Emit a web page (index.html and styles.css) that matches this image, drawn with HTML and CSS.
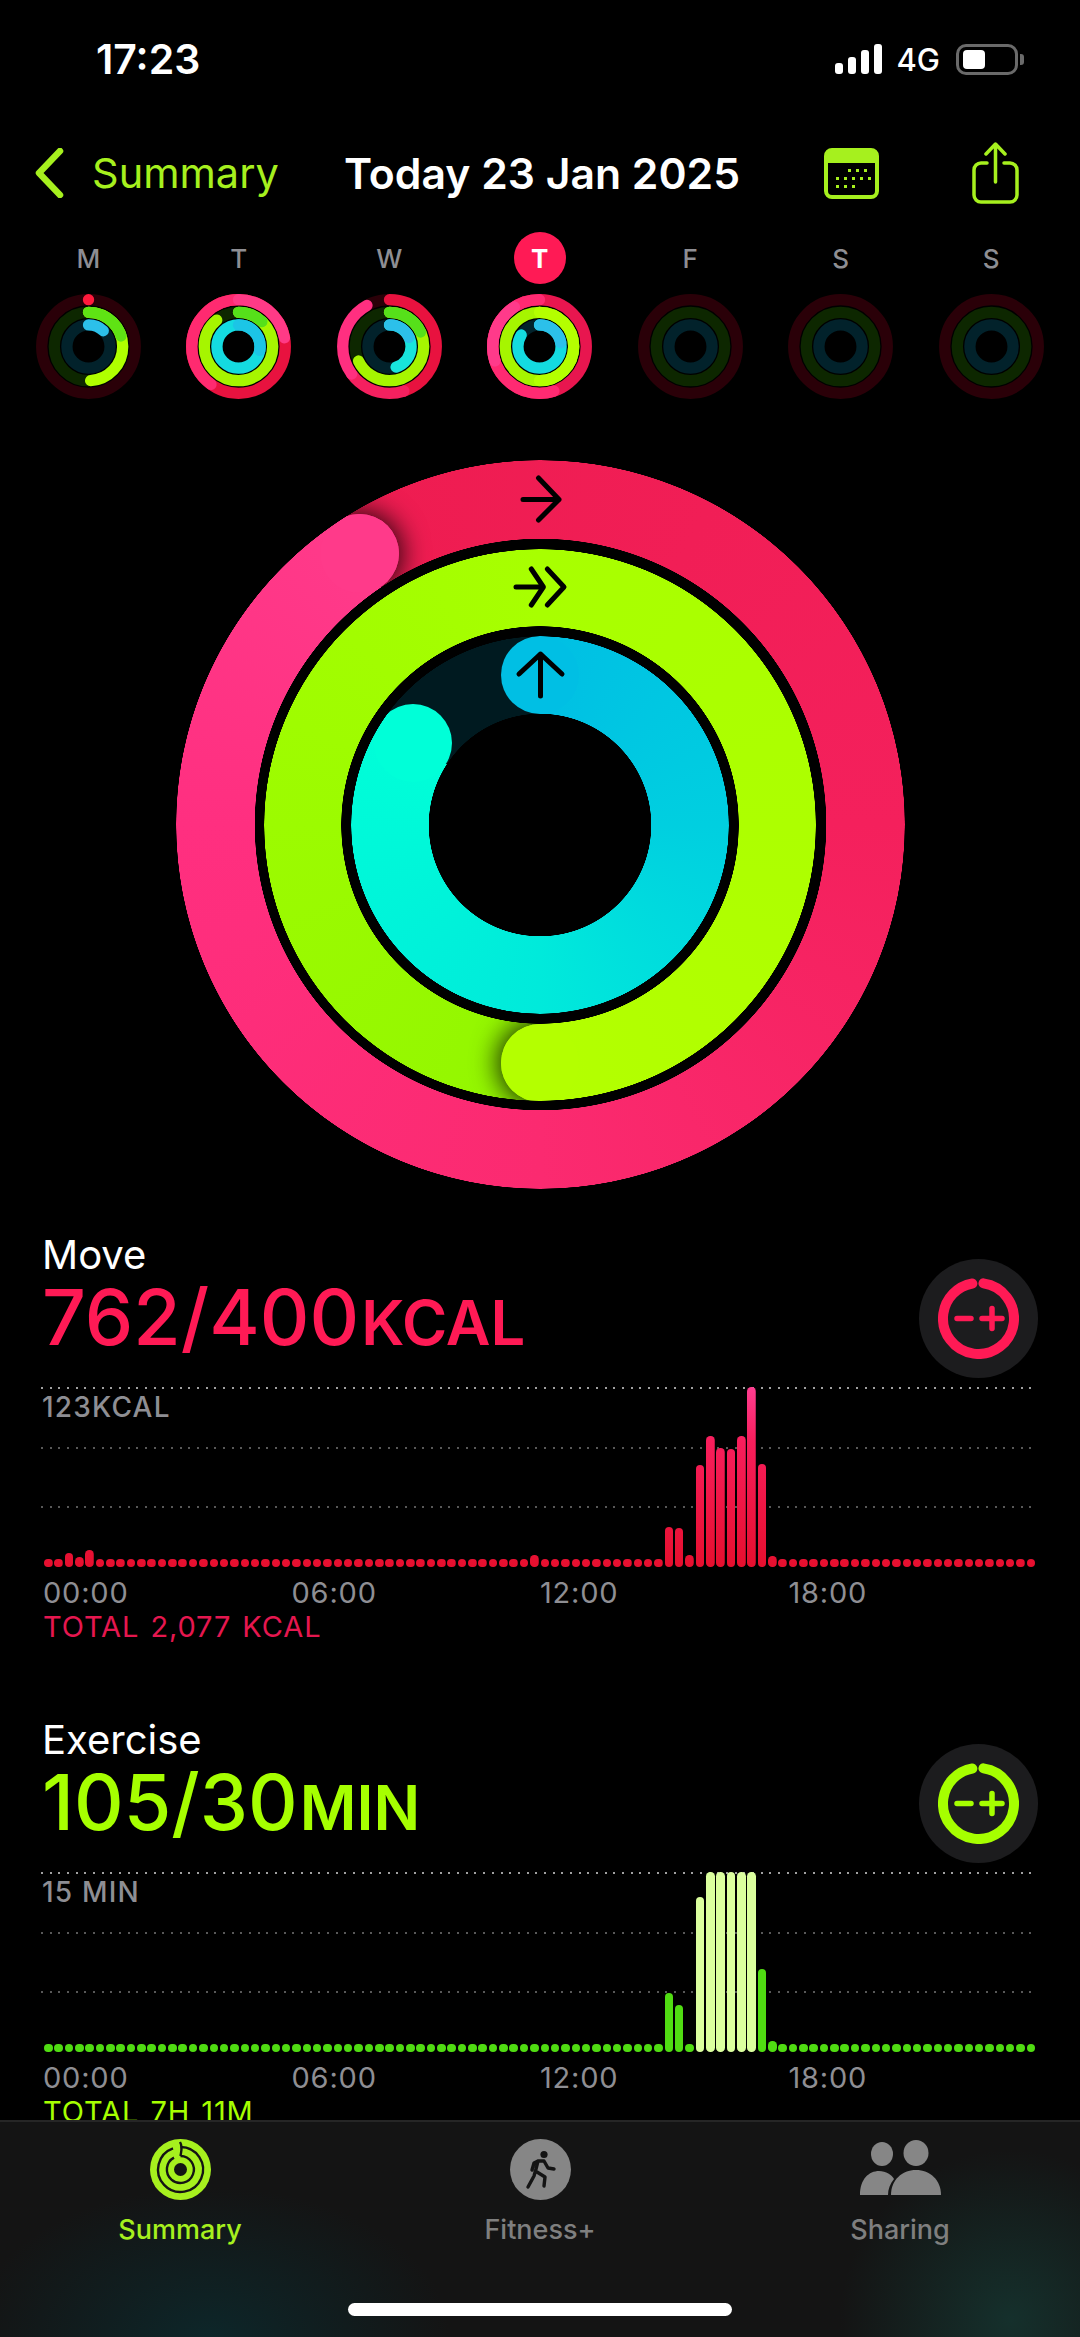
FILE: index.html
```html
<!DOCTYPE html>
<html>
<head>
  <title>Activity</title>
  <meta charset="UTF-8">
  <link rel="stylesheet" href="styles.css">
</head>
<body>
  <div class="screen">
    <div class="statusbar">
      <span class="clock">17:23</span>
      <div class="status-right">
        <div class="signal"><i></i><i></i><i></i><i></i></div>
        <span class="network">4G</span>
        <div class="battery"><div class="battery-fill"></div></div>
        <div class="battery-nub"></div>
      </div>
    </div>

    <div class="nav">
      <svg class="back" width="30" height="50" viewBox="0 0 30 50"><path d="M26 3 L5 25 L26 47"/></svg>
      <span class="nav-back">Summary</span>
      <span class="nav-title">Today 23 Jan 2025</span>
      <svg class="nav-cal" width="55" height="51" viewBox="0 0 55 51">
        <rect x="2" y="2" width="51" height="47" rx="6" class="cal-frame"/>
        <path d="M2 15 V8 a6 6 0 0 1 6 -6 H47 a6 6 0 0 1 6 6 V15 Z" class="cal-top"/>
        <g class="cal-dots">
          <rect x="24" y="21" width="3" height="3"/><rect x="32" y="21" width="3" height="3"/><rect x="40" y="21" width="3" height="3"/>
          <rect x="12" y="29" width="3" height="3"/><rect x="20" y="29" width="3" height="3"/><rect x="28" y="29" width="3" height="3"/><rect x="36" y="29" width="3" height="3"/><rect x="44" y="29" width="3" height="3"/>
          <rect x="12" y="37" width="3" height="3"/><rect x="20" y="37" width="3" height="3"/><rect x="28" y="37" width="3" height="3"/>
        </g>
      </svg>
      <svg class="nav-share" width="47" height="62" viewBox="0 0 47 62">
        <path d="M15 21 H9 a7 7 0 0 0 -7 7 V53 a7 7 0 0 0 7 7 H38 a7 7 0 0 0 7 -7 V28 a7 7 0 0 0 -7 -7 H32"/>
        <path d="M23.5 40 V3 M14 12 L23.5 2 L33 12"/>
      </svg>
    </div>

    <div class="week" id="week"></div>

    <div class="rings">
      <div class="ring ring-move">
        <div class="cap cap-move cap-shadow"></div>
        <div class="ring-tail tail-move"></div>
        <div class="cap cap-move"></div>
      </div>
      <div class="ring ring-exercise">
        <div class="cap cap-exercise cap-shadow"></div>
        <div class="ring-tail tail-exercise"></div>
        <div class="cap cap-exercise"></div>
      </div>
      <div class="ring ring-stand">
        <div class="cap cap-stand-start"></div>
        <div class="cap cap-stand-head"></div>
      </div>
      <svg class="ring-arrows" width="729" height="729" viewBox="0 0 729 729">
        <path d="M347 39.5 H383 M362.5 18 L383 39.5 L362.5 60"/>
        <path d="M340 127 H367 M355.3 109 L367.4 127 L355.3 145 M371.3 109 L388 127 L371.3 145"/>
        <path d="M364.5 236 V194 M343 214 L364.5 194 L386 214"/>
      </svg>
    </div>

    <div class="metric metric-move">
      <div class="metric-head">
        <div class="metric-text">
          <div class="metric-name">Move</div>
          <div class="metric-value">762/400<span class="metric-unit">KCAL</span></div>
        </div>
        <div class="adjust">
          <svg width="81" height="81" viewBox="0 0 81 81">
            <circle cx="40.5" cy="40.5" r="35.5" pathLength="100" stroke-dasharray="95 100" transform="rotate(-82 40.5 40.5)" class="adjust-ring"/>
            <path d="M19 40.5 H33 M44 40.5 H64 M54 30.5 V50.5" class="adjust-sign"/>
          </svg>
        </div>
      </div>
      <div class="chart" id="chart-move">
        <div class="grid grid-top"></div>
        <div class="grid grid-mid"></div>
        <div class="grid grid-low"></div>
        <div class="chart-max">123KCAL</div>
        <div class="bars"></div>
      </div>
      <div class="times"><span>00:00</span><span>06:00</span><span>12:00</span><span>18:00</span></div>
      <div class="total">TOTAL 2,077 KCAL</div>
    </div>

    <div class="metric metric-exercise">
      <div class="metric-head">
        <div class="metric-text">
          <div class="metric-name">Exercise</div>
          <div class="metric-value">105/30<span class="metric-unit">MIN</span></div>
        </div>
        <div class="adjust">
          <svg width="81" height="81" viewBox="0 0 81 81">
            <circle cx="40.5" cy="40.5" r="35.5" pathLength="100" stroke-dasharray="95 100" transform="rotate(-82 40.5 40.5)" class="adjust-ring"/>
            <path d="M19 40.5 H33 M44 40.5 H64 M54 30.5 V50.5" class="adjust-sign"/>
          </svg>
        </div>
      </div>
      <div class="chart" id="chart-exercise">
        <div class="grid grid-top"></div>
        <div class="grid grid-mid"></div>
        <div class="grid grid-low"></div>
        <div class="chart-max">15 MIN</div>
        <div class="bars"></div>
      </div>
      <div class="times"><span>00:00</span><span>06:00</span><span>12:00</span><span>18:00</span></div>
      <div class="total">TOTAL 7H 11M</div>
    </div>

    <div class="tabbar">
      <div class="tab tab-active">
        <svg width="61" height="61" viewBox="0 0 61 61">
          <circle cx="30.5" cy="30.5" r="30.5" fill="#a6f01e"/>
          <path d="M30.5 8 A22.5 22.5 0 1 1 23 9.3 M30.5 17 A13.5 13.5 0 1 1 24 18.6" class="tab-rings"/>
          <path d="M30 3 C33 8 31 13 30.5 17" class="tab-rings"/>
          <circle cx="30.5" cy="30.5" r="6.5" fill="#141414"/>
        </svg>
        <span>Summary</span>
      </div>
      <div class="tab">
        <svg width="61" height="61" viewBox="0 0 61 61">
          <circle cx="30.5" cy="30.5" r="30.5" fill="#868686"/>
          <circle cx="34" cy="15.5" r="3.6" fill="#141414"/>
          <path d="M18 48 L24 37 L26 30 L28 22 L34 22 L38 29 L44 30 M28 22 L24 24 L22 31 M27 33 L35 38 L34 47" class="tab-runner"/>
        </svg>
        <span>Fitness+</span>
      </div>
      <div class="tab">
        <svg width="81" height="61" viewBox="0 0 81 61">
          <ellipse cx="22" cy="15" rx="11" ry="12" fill="#868686"/>
          <ellipse cx="56" cy="14" rx="12.5" ry="13" fill="#868686"/>
          <path d="M0 56 C0 40 9 32 19 32 C26 32 32 36 34 40 C30 45 28 50 28 56 Z" fill="#868686"/>
          <path d="M31 56 C31 41 42 31 56 31 C70 31 81 41 81 56 Z" fill="#868686"/>
        </svg>
        <span>Sharing</span>
      </div>
      <div class="home-bar"></div>
    </div>
  </div>

  <script src="app.js"></script>
</body>
</html>
```

FILE: styles.css
```css
* {
  box-sizing: border-box;
}

html, body {
  margin: 0;
  padding: 0;
  background: #000;
}

.screen {
  position: relative;
  width: 1080px;
  height: 2337px;
  overflow: hidden;
  background: #000;
  color: #fff;
  font-family: Inter, "Liberation Sans", sans-serif;
}

/* status bar */
.statusbar {
  display: flex;
  justify-content: space-between;
  align-items: center;
  height: 118px;
  padding-left: 96px;
  padding-right: 56px;
}

.clock {
  font-size: 41px;
  font-weight: 600;
}

.status-right {
  display: flex;
  align-items: center;
}

.signal {
  display: flex;
  align-items: flex-end;
  gap: 5px;
  height: 30px;
  margin-right: 14px;
}

.signal i {
  display: block;
  width: 8px;
  background: #fff;
  border-radius: 3px;
}

.signal i:nth-child(1) { height: 11px; }
.signal i:nth-child(2) { height: 17px; }
.signal i:nth-child(3) { height: 24px; }
.signal i:nth-child(4) { height: 30px; }

.network {
  font-size: 31px;
  font-weight: 500;
  margin-right: 16px;
}

.battery {
  width: 62px;
  height: 31px;
  padding: 3px 4px;
  border: 3px solid #6a6a6a;
  border-radius: 10px;
}

.battery-fill {
  width: 22px;
  height: 100%;
  background: #fff;
  border-radius: 4px;
}

.battery-nub {
  width: 4px;
  height: 11px;
  margin-left: 2px;
  background: #6a6a6a;
  border-radius: 0 3px 3px 0;
}

/* nav */
.nav {
  display: flex;
  align-items: center;
  height: 114px;
  padding-bottom: 4px;
  padding-left: 34px;
}

.back {
  fill: none;
  stroke: #a6f01e;
  stroke-width: 6.5;
  stroke-linecap: round;
  stroke-linejoin: round;
}

.nav-back {
  margin-left: 28px;
  width: 186px;
  font-size: 41.5px;
  color: #a6f01e;
  white-space: nowrap;
}

.nav-title {
  margin-left: 66px;
  width: 393px;
  font-size: 42.7px;
  font-weight: 600;
  white-space: nowrap;
}

.nav-cal {
  margin-left: 87px;
}

.cal-frame {
  fill: none;
  stroke: #a6f01e;
  stroke-width: 4;
}

.cal-top {
  fill: #a6f01e;
}

.cal-dots {
  fill: #a6f01e;
}

.nav-share {
  margin-left: 93px;
  fill: none;
  stroke: #a6f01e;
  stroke-width: 3.5;
  stroke-linecap: round;
  stroke-linejoin: round;
}

/* week strip */
.week {
  display: grid;
  grid-template-columns: repeat(7, 150.5px);
  margin-left: 13px;
}

.day {
  display: flex;
  flex-direction: column;
  align-items: center;
  gap: 10px;
}

.day-label {
  display: flex;
  justify-content: center;
  align-items: center;
  width: 52px;
  height: 52px;
  border-radius: 50%;
  font-size: 26px;
  font-weight: 500;
  color: #8e8e93;
}

.day-today {
  background: #ff1a55;
  color: #fff;
  font-weight: 700;
}

.day svg {
  display: block;
  fill: none;
  stroke-width: 11.3;
  stroke-linecap: round;
}

/* big rings */
.rings {
  position: relative;
  display: grid;
  place-items: center;
  width: 729px;
  height: 729px;
  margin: 61px auto 0;
}

.ring {
  position: relative;
  grid-area: 1 / 1;
  border-radius: 50%;
}

.ring-move {
  width: 729px;
  height: 729px;
  background: conic-gradient(from 326deg, #ee1c50 0deg, #f4205c 124deg, #fb2a70 214deg, #ff2f80 304deg, #ff3a8a 360deg);
  -webkit-mask: radial-gradient(circle closest-side, transparent 285.5px, #000 286px, #000 364px, transparent 364.5px);
  mask: radial-gradient(circle closest-side, transparent 285.5px, #000 286px, #000 364px, transparent 364.5px);
}

.ring-exercise {
  width: 552px;
  height: 552px;
  background: conic-gradient(#a8ff00 0deg, #adff00 90deg, #b4ff00 180deg, #93f600 180deg, #9cfb00 270deg, #a8ff00 360deg);
  -webkit-mask: radial-gradient(circle closest-side, transparent 198.5px, #000 199px, #000 275.5px, transparent 276px);
  mask: radial-gradient(circle closest-side, transparent 198.5px, #000 199px, #000 275.5px, transparent 276px);
}

.ring-stand {
  width: 378px;
  height: 378px;
  background: conic-gradient(#00bfe4 0deg, #00cfe0 90deg, #00eadb 180deg, #00ffd8 303deg, #001a20 303deg, #001a20 360deg);
  -webkit-mask: radial-gradient(circle closest-side, transparent 111px, #000 111.5px, #000 188.5px, transparent 189px);
  mask: radial-gradient(circle closest-side, transparent 111px, #000 111.5px, #000 188.5px, transparent 189px);
}

.ring-tail {
  position: absolute;
  inset: 0;
  border-radius: 50%;
}

.tail-move {
  background: conic-gradient(from 326deg, transparent 0deg 214deg, #fb2a70 214deg, #ff2f80 304deg, #ff3a8a 360deg);
}

.tail-exercise {
  background: conic-gradient(#a8ff00 0deg, #adff00 90deg, #b4ff00 180deg, transparent 180deg);
}

.cap {
  position: absolute;
  border-radius: 50%;
}

.cap-shadow {
  box-shadow: 0 0 26px 4px rgba(0, 0, 0, 0.8);
}

.cap-move {
  left: 144px;
  top: 54px;
  width: 79px;
  height: 79px;
  background: #ff3a8a;
}

.cap-exercise {
  left: 237px;
  top: 475px;
  width: 78px;
  height: 78px;
  background: #b4ff00;
}

.cap-stand-start {
  left: 150px;
  top: 0;
  width: 78px;
  height: 78px;
  background: #00bfe4;
}

.cap-stand-head {
  left: 23px;
  top: 68px;
  width: 78px;
  height: 78px;
  background: #00ffd8;
}

.ring-arrows {
  position: absolute;
  left: 0;
  top: 0;
  fill: none;
  stroke: #000;
  stroke-width: 5;
  stroke-linecap: round;
  stroke-linejoin: round;
}

/* metric sections */
.metric {
  height: 485px;
  padding-left: 44px;
  padding-right: 42px;
}

.metric-move {
  margin-top: 45px;
}

.metric-move { --tint: #ff1a55; }
.metric-exercise { --tint: #a6ff00; }

.metric-head {
  display: flex;
  justify-content: space-between;
  height: 143px;
  margin-bottom: 10px;
}

.metric-text {
  margin-left: -2px;
}

.metric-name {
  font-size: 40px;
  line-height: 42px;
  height: 44px;
}

.metric-value {
  font-size: 77px;
  font-weight: 500;
  line-height: 78px;
  color: var(--tint);
  white-space: nowrap;
}

.metric-unit {
  margin-left: 2px;
  font-size: 61.5px;
  font-weight: 600;
}

.adjust {
  display: flex;
  justify-content: center;
  align-items: center;
  width: 119px;
  height: 119px;
  margin-top: 25px;
  border-radius: 50%;
  background: #1c1c1e;
}

.adjust-ring {
  fill: none;
  stroke: var(--tint);
  stroke-width: 10;
  stroke-linecap: round;
}

.adjust-sign {
  fill: none;
  stroke: var(--tint);
  stroke-width: 5.5;
  stroke-linecap: round;
}

.chart {
  position: relative;
  height: 180px;
  margin-right: 2px;
}

.grid {
  position: absolute;
  left: -3px;
  right: 2px;
  height: 2px;
}

.grid-top {
  top: 0;
  background: repeating-linear-gradient(to right, #a0a0a0 0 2px, transparent 2px 8.67px);
}

.grid-mid {
  top: 60px;
  background: repeating-linear-gradient(to right, #585858 0 2px, transparent 2px 8.67px);
}

.grid-low {
  top: 119px;
  background: repeating-linear-gradient(to right, #585858 0 2px, transparent 2px 8.67px);
}

.chart-max {
  position: absolute;
  left: -2px;
  top: 3px;
  font-size: 28px;
  font-weight: 500;
  letter-spacing: 1.2px;
  line-height: 34px;
  color: #8e8e93;
}

.bars {
  position: absolute;
  inset: 0;
  display: flex;
  justify-content: space-between;
  align-items: flex-end;
}

.bar {
  width: 8.5px;
  border-radius: 4.25px;
}

.metric-move .bar {
  background: linear-gradient(to top, #e60f2e, #f81e5c 70%, #ff3d90) bottom / 100% 180px no-repeat;
}

.metric-exercise .bar {
  background: #50dc12;
}

.metric-exercise .bar-pale {
  background: #dbff9e;
}

.times {
  display: grid;
  grid-template-columns: repeat(4, 248.5px);
  margin-top: 9px;
  margin-left: -1px;
  font-size: 29px;
  letter-spacing: 0.8px;
  line-height: 34px;
  color: #8e8e93;
}

.total {
  margin-left: -1px;
  font-size: 29px;
  letter-spacing: 0.9px;
  word-spacing: 2px;
  line-height: 34px;
  color: var(--tint);
}

.metric-move .total {
  color: #e5174f;
}

/* tab bar, sits over the scrolling content */
.tabbar {
  position: absolute;
  left: 0;
  right: 0;
  bottom: 0;
  display: grid;
  grid-template-columns: repeat(3, 360px);
  height: 217px;
  padding-top: 17px;
  border-top: 2px solid #262626;
  background:
    radial-gradient(ellipse 240px 150px at 210px 100%, #0d2629, transparent),
    radial-gradient(ellipse 170px 170px at 1010px 92%, #15302c, transparent),
    #141414;
}

.tab {
  display: flex;
  flex-direction: column;
  align-items: center;
  font-size: 27px;
  font-weight: 500;
  color: #7f7f7f;
}

.tab svg {
  display: block;
  height: 61px;
}

.tab span {
  margin-top: 14px;
  line-height: 32px;
}

.tab-active {
  color: #a6f01e;
}

.tab-rings {
  fill: none;
  stroke: #141414;
  stroke-width: 2.4;
}

.tab-runner {
  fill: none;
  stroke: #141414;
  stroke-width: 3.4;
  stroke-linecap: round;
  stroke-linejoin: round;
}

.home-bar {
  position: absolute;
  left: 348px;
  bottom: 21px;
  width: 384px;
  height: 13px;
  border-radius: 7px;
  background: #fff;
}
```

FILE: app.js
```js
// week strip: each ring is a list of [colour, start %, end %]
const RADII = [46.8, 34.2, 21.6];
const TRACKS = ['#2a0008', '#0d2700', '#02222b'];

const days = [
  { label: 'M', rings: [
    [['#ff1a3c', 0, 0.01]],
    [['#b0ff00', 0, 49], ['#5fe314', 0, 20]],
    [['#2cc0ea', 0, 12]]
  ] },
  { label: 'T', rings: [
    [['#e8123f', 0, 100], ['#ff2a70', 60, 100], ['#ff3a86', 0, 22]],
    [['#a6f500', 0, 89], ['#56e01a', 0, 12]],
    [['#14dbe0', 0, 100], ['#1cc5e6', 0, 28]]
  ] },
  { label: 'W', rings: [
    [['#e8123f', 0, 45], ['#f4205f', 45, 65], ['#ff2f80', 65, 92]],
    [['#a6f500', 0, 68], ['#56e01a', 0, 18]],
    [['#18e4dc', 0, 45], ['#2cc0ea', 0, 18]]
  ] },
  { label: 'T', today: true, rings: [
    [['#e8164f', 0, 100], ['#ff2a72', 45, 100], ['#ff3a8a', 70, 91]],
    [['#a6f500', 0, 100], ['#b4ff00', 0, 50]],
    [['#14dbe0', 0, 84], ['#2cc0ea', 0, 22]]
  ] },
  { label: 'F', rings: [[], [], []] },
  { label: 'S', rings: [[], [], []] },
  { label: 'S', rings: [[], [], []] }
];

function arc(r, colour, start, end) {
  const len = end - start;
  return `<circle cx="52.5" cy="52.5" r="${r}" pathLength="100" stroke="${colour}" ` +
    `stroke-dasharray="${len} 100" stroke-dashoffset="${-start}" transform="rotate(-90 52.5 52.5)"/>`;
}

const week = document.getElementById('week');
days.forEach(day => {
  let circles = '';
  day.rings.forEach((arcs, i) => {
    circles += `<circle cx="52.5" cy="52.5" r="${RADII[i]}" stroke="${TRACKS[i]}"/>`;
    arcs.forEach(a => { circles += arc(RADII[i], a[0], a[1], a[2]); });
  });
  const cls = day.today ? 'day-label day-today' : 'day-label';
  week.innerHTML += `<div class="day"><div class="${cls}">${day.label}</div>` +
    `<svg width="105" height="105" viewBox="0 0 105 105">${circles}</svg></div>`;
});

// hourly charts: 96 bars, heights in px, everything else is the small dot
const moveBars = { 2: 14, 3: 10, 4: 17, 47: 12, 60: 40, 61: 39, 62: 12, 63: 102, 64: 131, 65: 119, 66: 118, 67: 131, 68: 180, 69: 103, 70: 11 };
const exerciseBars = { 60: 59, 61: 47, 63: 155, 64: 180, 65: 180, 66: 180, 67: 180, 68: 180, 69: 83, 70: 11 };

function fillBars(id, heights, paleFrom, paleTo) {
  const bars = document.querySelector(`#${id} .bars`);
  for (let i = 0; i < 96; i++) {
    const bar = document.createElement('div');
    bar.className = i >= paleFrom && i <= paleTo ? 'bar bar-pale' : 'bar';
    bar.style.height = (heights[i] || 8.5) + 'px';
    bars.appendChild(bar);
  }
}

fillBars('chart-move', moveBars, -1, -1);
fillBars('chart-exercise', exerciseBars, 63, 68);
```
